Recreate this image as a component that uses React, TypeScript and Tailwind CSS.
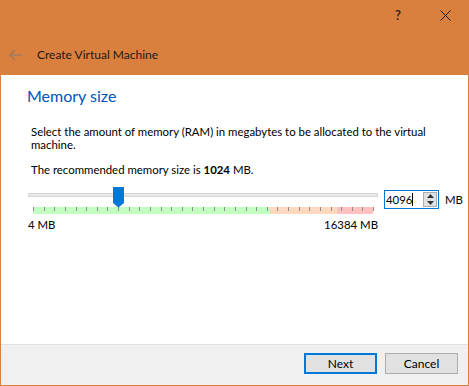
import React from 'react';

const ticks = Array.from({ length: 33 }, (_, i) => i);

function MemorySlider() {
  return (
    <div className="relative w-[350px] h-[22px]">
      {/* track */}
      <div className="absolute left-0 right-0 top-[5px] h-[4px] bg-[#e7e7e7] border border-[#d6d6d6]" />
      {/* colored bands */}
      <div className="absolute left-[5px] top-[19px] h-[7px] w-[236px] bg-[#c0ffc0]" />
      <div className="absolute left-[241px] top-[19px] h-[7px] w-[68px] bg-[#ffd8c0]" />
      <div className="absolute left-[309px] top-[19px] h-[7px] w-[36px] bg-[#ffc0c0]" />
      {ticks.map((i) => (
        <div
          key={i}
          className="absolute top-[19px] h-[4px] w-px bg-[#8c8c8c]"
          style={{ left: 5 + Math.round(i * 10.625) }}
        />
      ))}
      {/* thumb */}
      <svg className="absolute left-[85px] top-[-1px]" width="12" height="21" viewBox="0 0 12 21">
        <path d="M0 0 H11 V16 L5.5 20.5 L0 16 Z" fill="#0078d7" />
      </svg>
    </div>
  );
}

export default function App() {
  return (
    <div
      className="w-[469px] h-[386px] flex flex-col border border-[#d9803f] bg-white text-[11.4px] text-black"
      style={{ fontFamily: 'Lato, "Noto Sans", sans-serif' }}
    >
      <div className="bg-[#d9803f] h-[74px] flex flex-col">
        <div className="flex justify-end items-center h-[28px] pr-[17px] gap-[39px]">
          <span className="text-[13px] leading-none font-semibold text-[#1a1a1a]">?</span>
          <svg width="11" height="11" viewBox="0 0 11 11">
            <path d="M0.5 0.5 L10.5 10.5 M10.5 0.5 L0.5 10.5" stroke="#1a1a1a" strokeWidth="1" />
          </svg>
        </div>
        <div className="flex items-center h-[46px] pl-[8px] pt-[5px]">
          <svg width="14" height="12" viewBox="0 0 14 12" className="mr-[14px]">
            <path d="M1 6 H13 M6 1 L1 6 L6 11" stroke="#a57b5f" strokeWidth="1.6" fill="none" />
          </svg>
          <span className="text-[12px] text-[#1a1a1a]">Create Virtual Machine</span>
        </div>
      </div>

      <div className="flex-1 flex flex-col pt-[10px]">
        <div className="pl-[26px] text-[16px] leading-[22px] text-[#0054b8]">Memory size</div>
        <div className="pl-[30px] pr-[10px] mt-[18px] leading-[13px]">
          Select the amount of memory (RAM) in megabytes to be allocated to the virtual machine.
        </div>
        <div className="pl-[30px] mt-[12px] leading-[14px]">
          The recommended memory size is <span className="font-bold">1024</span> MB.
        </div>
        <div className="flex items-start pl-[27px] mt-[11px]">
          <MemorySlider />
          <div className="ml-[6px] mt-[2px] w-[55px] h-[19px] border border-[#0078d7] flex items-center">
            <span className="pl-[1px] leading-none">4096</span>
            <span className="w-px h-[13px] bg-black" />
            <div className="ml-auto mr-[1px] w-[14px] h-[15px] border border-[#adadad] bg-[#e1e1e1] flex flex-col items-center justify-around">
              <svg width="7" height="4" viewBox="0 0 7 4"><path d="M0 4 L3.5 0 L7 4 Z" fill="#333" /></svg>
              <svg width="7" height="4" viewBox="0 0 7 4"><path d="M0 0 L3.5 4 L7 0 Z" fill="#333" /></svg>
            </div>
          </div>
          <span className="ml-[6px] mt-[4px] leading-[16px]">MB</span>
        </div>
        <div className="flex w-[350px] ml-[27px] mt-[8px] justify-between leading-[14px]">
          <span>4 MB</span>
          <span>16384 MB</span>
        </div>
      </div>

      <div className="h-[41px] bg-[#f0f0f0] border-t border-[#dfdfdf] flex items-start justify-end pt-[8px] pr-[10px] gap-[8px]">
        <button className="w-[73px] h-[21px] border-2 border-[#0078d7] bg-[#e1e1e1] text-[12px] leading-none">
          Next
        </button>
        <button className="w-[73px] h-[21px] border border-[#adadad] bg-[#e1e1e1] text-[12px] leading-none">
          Cancel
        </button>
      </div>
    </div>
  );
}
